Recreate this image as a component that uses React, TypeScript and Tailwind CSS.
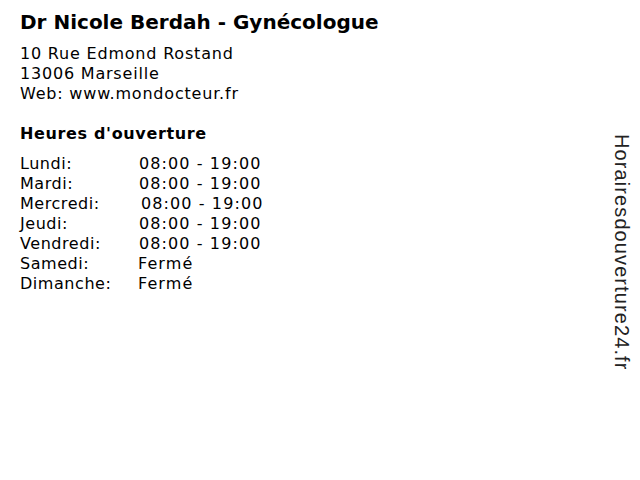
import React from 'react';

const hours = [
  { day: 'Lundi:', time: '08:00 - 19:00', shift: '' },
  { day: 'Mardi:', time: '08:00 - 19:00', shift: '' },
  { day: 'Mercredi:', time: '08:00 - 19:00', shift: 'pl-[2px]' },
  { day: 'Jeudi:', time: '08:00 - 19:00', shift: '' },
  { day: 'Vendredi:', time: '08:00 - 19:00', shift: '' },
  { day: 'Samedi:', time: 'Fermé', shift: '-ml-px' },
  { day: 'Dimanche:', time: 'Fermé', shift: '-ml-px' },
];

export default function App() {
  return (
    <div className="relative w-[640px] h-[480px] bg-white text-black font-['DejaVu_Sans',sans-serif]">
      <div className="pl-5 pt-[9px]">
        <h1 className="text-[20px] leading-[26px] font-bold">Dr Nicole Berdah - Gynécologue</h1>

        <div className="mt-[9px] text-[16px] leading-[20px] tracking-[0.8px]">
          <div>10 Rue Edmond Rostand</div>
          <div>13006 Marseille</div>
          <div>Web: www.mondocteur.fr</div>
        </div>

        <h2 className="mt-[20px] text-[16px] leading-[20px] font-bold tracking-[0.65px]">Heures d'ouverture</h2>

        <div className="mt-[10px] grid grid-cols-[119px_auto] text-[16px] leading-[20px] w-fit">
          {hours.map((h) => (
            <React.Fragment key={h.day}>
              <div className="tracking-[0.55px]">{h.day}</div>
              <div className={`tracking-[1.1px] ${h.shift}`}>{h.time}</div>
            </React.Fragment>
          ))}
        </div>
      </div>

      {/* site watermark */}
      <div className="absolute right-[6px] top-[134px] [writing-mode:vertical-rl] text-[20px] leading-[24px] tracking-[1.1px] font-['Liberation_Sans',sans-serif] text-[#222]">
        Horairesdouverture24.fr
      </div>
    </div>
  );
}
